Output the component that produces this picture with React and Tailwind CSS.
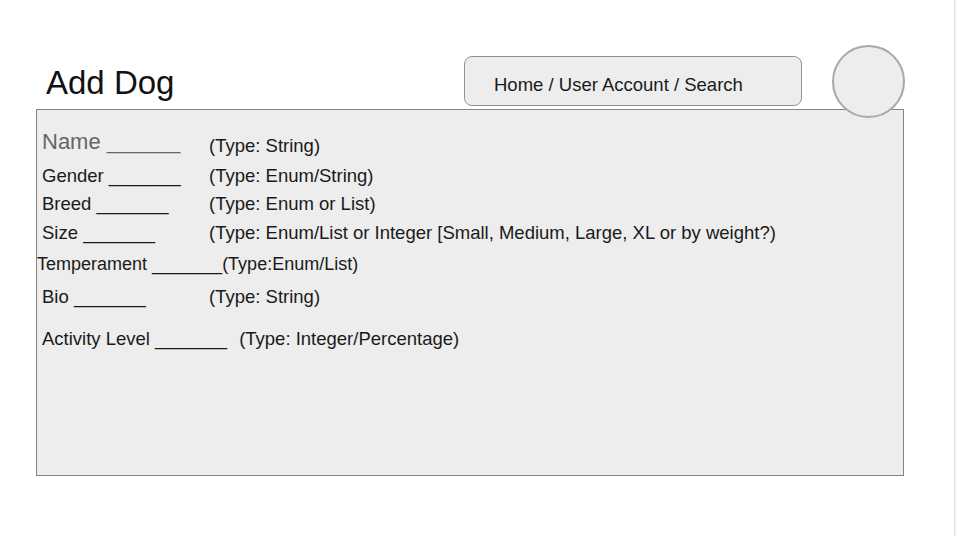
import React from 'react'

const fields = [
  { label: 'Gender', type: '(Type: Enum/String)', mt: 'mt-[6px]' },
  { label: 'Breed', type: '(Type: Enum or List)', mt: 'mt-0' },
  { label: 'Size', type: '(Type: Enum/List or Integer [Small, Medium, Large, XL or by weight?)', mt: 'mt-[1px]' },
]

const App = () => {
  return (
    <div className="w-[957px] h-[536px] bg-white flex font-['Liberation_Sans',Arial,sans-serif] text-[#1a1a1a] overflow-hidden">
      <div className="flex-1 pt-[45px]">
        {/* Header */}
        <div className="h-[64px] flex items-start pl-[46px]">
          <div className="w-[418px] mt-[21px] text-[33px] leading-none text-[#111]">Add Dog</div>
          <div className="w-[338px] h-[50px] mt-[11px] rounded-[8px] border border-[#929292] bg-[#ededed] flex items-center pl-[29px] pt-[7px] text-[18.5px] text-[#1a1a1a]">
            Home / User Account / Search
          </div>
          <div className="relative z-10 ml-[30px] w-[73px] h-[73px] rounded-full border-2 border-[#a8a8a8] bg-[#ededed]"></div>
        </div>

        {/* Form box */}
        <div className="ml-[36px] w-[868px] h-[367px] border border-[#858585] bg-[#ededed] pl-[5px] text-[18.5px]">
          <div className="mt-[18px] h-[28px] flex items-center">
            <div className="w-[167px] text-[22px] leading-[28px] text-[#666] whitespace-pre">Name ______</div>
            <div className="mt-[8px] leading-[28px]">(Type: String)</div>
          </div>

          {fields.map((f) => (
            <div key={f.label} className={`${f.mt} h-[28px] flex items-center leading-[28px]`}>
              <div className="w-[167px] whitespace-pre">{f.label} _______</div>
              <div className="whitespace-pre">{f.type}</div>
            </div>
          ))}

          <div className="mt-[3px] -ml-[5px] h-[28px] flex items-center leading-[28px] text-[18px]">
            <div className="whitespace-pre">Temperament _______</div>
            <div className="whitespace-pre">(Type:Enum/List)</div>
          </div>

          <div className="mt-[5px] h-[28px] flex items-center leading-[28px]">
            <div className="w-[167px] whitespace-pre">Bio _______</div>
            <div className="whitespace-pre">(Type: String)</div>
          </div>

          <div className="mt-[14px] h-[28px] flex items-center leading-[28px]">
            <div className="whitespace-pre">Activity Level _______</div>
            <div className="ml-[12px] whitespace-pre">(Type: Integer/Percentage)</div>
          </div>
        </div>
      </div>

      {/* scrollbar strip */}
      <div className="w-[3px] border-l border-[#e2e2e2] bg-[#f7f7f7]"></div>
    </div>
  )
}

export default App
